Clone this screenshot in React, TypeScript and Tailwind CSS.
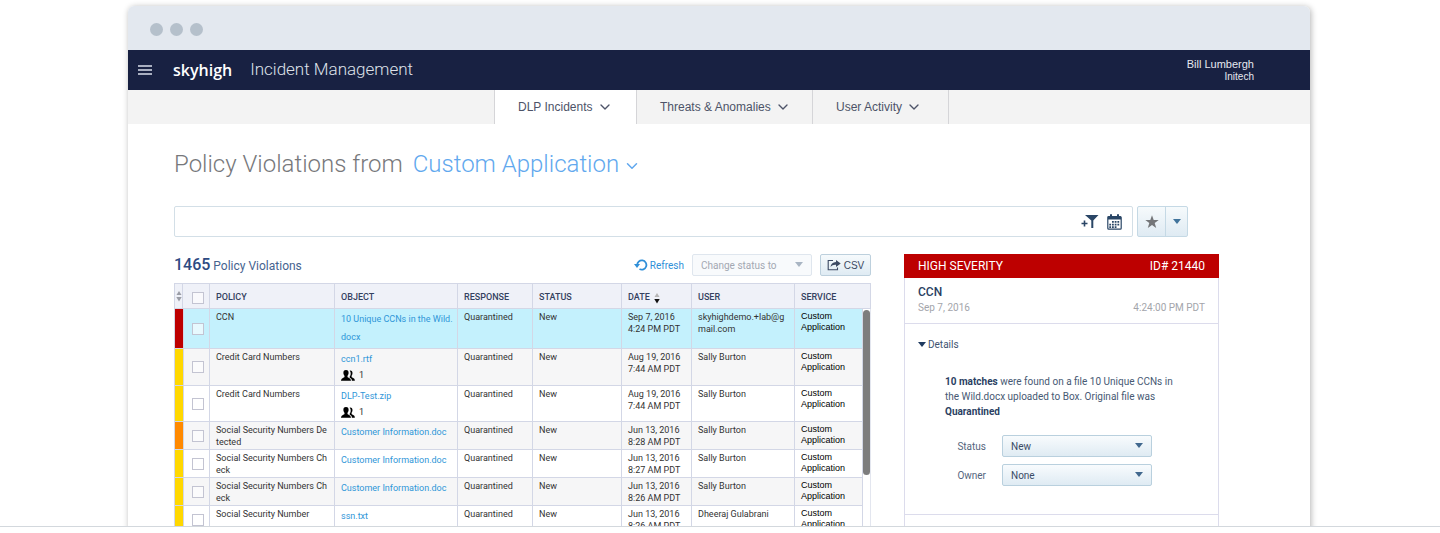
import type { ReactNode } from "react";
import { ChevronDown } from "lucide-react";

type Row = {
  severity: "high" | "medium" | "low";
  policy: string;
  object: string;
  shared?: number;
  date: string;
  user: string;
  height: string;
};

const rows: Row[] = [
  { severity: "high", policy: "CCN", object: "10 Unique CCNs in the Wild.\ndocx", date: "Sep 7, 2016\n4:24 PM PDT", user: "skyhighdemo.+lab@g\nmail.com", height: "h-10" },
  { severity: "low", policy: "Credit Card Numbers", object: "ccn1.rtf", shared: 1, date: "Aug 19, 2016\n7:44 AM PDT", user: "Sally Burton", height: "h-[37px]" },
  { severity: "low", policy: "Credit Card Numbers", object: "DLP-Test.zip", shared: 1, date: "Aug 19, 2016\n7:44 AM PDT", user: "Sally Burton", height: "h-9" },
  { severity: "medium", policy: "Social Security Numbers De\ntected", object: "Customer Information.doc", date: "Jun 13, 2016\n8:28 AM PDT", user: "Sally Burton", height: "h-7" },
  { severity: "low", policy: "Social Security Numbers Ch\neck", object: "Customer Information.doc", date: "Jun 13, 2016\n8:27 AM PDT", user: "Sally Burton", height: "h-7" },
  { severity: "low", policy: "Social Security Numbers Ch\neck", object: "Customer Information.doc", date: "Jun 13, 2016\n8:26 AM PDT", user: "Sally Burton", height: "h-7" },
  { severity: "low", policy: "Social Security Number", object: "ssn.txt", date: "Jun 13, 2016\n8:26 AM PDT", user: "Dheeraj Gulabrani", height: "h-7" },
];

const severityColor = {
  high: "bg-[#bd0000]",
  medium: "bg-[#ff8a00]",
  low: "bg-[#ffd800]",
};

const tabs = [
  { label: "DLP Incidents", style: "w-[143px] border-l bg-white" },
  { label: "Threats & Anomalies", style: "w-[176px]" },
  { label: "User Activity", style: "w-[136px]" },
];

function Caret({ className = "" }: { className?: string }) {
  return (
    <svg viewBox="0 0 8 5" className={`h-[5px] w-2 fill-current ${className}`} aria-hidden="true">
      <path d="M0 0h8L4 5z" />
    </svg>
  );
}

function SortIcon({ active = false }: { active?: boolean }) {
  return (
    <svg viewBox="0 0 6 12" className="inline-block h-3 w-1.5" aria-hidden="true">
      <path d="M3 1l2.5 4h-5z" fill={active ? "#b5b5b5" : "#9a9da6"} />
      <path d="M3 11.5L.3 7h5.4z" fill={active ? "#111" : "#9a9da6"} />
    </svg>
  );
}

function PeopleIcon() {
  return (
    <svg viewBox="0 0 14 11" className="h-[11px] w-3.5 fill-black" aria-hidden="true">
      <path d="M9.200.4c1.600 0 2.400 1.200 2.300 2.800-.1 1.200-.4 2-.9 2.500v1.200c.3.7 3.200.9 3.200 3.300v.6h-2.900c0-1.800-1-2.500-2.200-3V6.600c.9-1 1.200-2.500.9-4.100-.1-.7-.5-1.300-1-1.800z" />
      <path d="M5 0c1.900 0 2.700 1.300 2.600 3-.1 1.300-.5 2.100-1.100 2.700v1.200c.3.8 3.500 1 3.500 3.900H0C0 7.900 3.200 7.700 3.500 6.900V5.700C2.900 5.100 2.500 4.300 2.400 3 2.300 1.300 3.100 0 5 0z" />
    </svg>
  );
}

function RefreshIcon() {
  return (
    <svg viewBox="0 0 14 12" className="h-3 w-3.5" aria-hidden="true">
      <path d="M3.200 6.200a4.600 4.600 0 1 1 2.300 3.800" fill="none" stroke="currentColor" strokeWidth="1.800" />
      <path d="M0 5h6L3 9z" fill="currentColor" />
    </svg>
  );
}

function ExportIcon() {
  return (
    <svg viewBox="0 0 14 12" className="h-3 w-3.5" fill="none" aria-hidden="true">
      <path d="M6 1.500H1.200v9.300h9.300V8.500" stroke="currentColor" strokeWidth="1.100" />
      <path d="M9 1l4.700 3.500L9 8V5.800C6.500 5.600 5 6.300 3.500 8c.3-3 2.200-4.800 5.500-5z" fill="currentColor" />
    </svg>
  );
}

function FilterAddIcon() {
  return (
    <svg viewBox="0 0 18 15" className="h-[15px] w-[18px]" aria-hidden="true">
      <path d="M4 1h13.500l-5.200 5.500V14h-2V6.500z" fill="currentColor" />
      <path d="M.5 9.500h6M3.500 6.500v6" stroke="currentColor" strokeWidth="1.600" />
    </svg>
  );
}

function CalendarIcon() {
  return (
    <svg viewBox="0 0 15 16" className="h-4 w-[15px]" fill="none" aria-hidden="true">
      <rect x=".8" y="2.500" width="13.400" height="12.700" rx="1" stroke="currentColor" strokeWidth="1.200" />
      <path d="M1 2.500h13v3H1z" fill="currentColor" />
      <path d="M4 .3v3M11 .3v3" stroke="currentColor" strokeWidth="2" />
      <path
        d="M5 7h1.800v1.700H5zM7.700 7h1.800v1.700H7.700zM10.400 7h1.800v1.700h-1.800zM2.300 9.700h1.800v1.700H2.300zM5 9.700h1.800v1.700H5zM7.700 9.700h1.800v1.700H7.700zM10.400 9.700h1.800v1.700h-1.800zM2.300 12.300h1.800V14H2.300zM5 12.300h1.800V14H5zM7.700 12.300h1.800V14H7.700z"
        fill="currentColor"
      />
    </svg>
  );
}

function Checkbox({ label }: { label: string }) {
  return (
    <input
      type="checkbox"
      aria-label={label}
      className="block size-3 appearance-none border border-[#c3c4d2] bg-white/60"
    />
  );
}

function Th({ children, className = "pl-1.5", colSpan }: { children?: ReactNode; className?: string; colSpan?: number }) {
  return (
    <th
      colSpan={colSpan}
      className={`border-r border-b border-[#d3d7e6] pt-[3px] text-left text-[9px] font-medium text-[#34415f] ${className}`}
    >
      {children}
    </th>
  );
}

function Td({ children, className = "leading-3" }: { children?: ReactNode; className?: string }) {
  return (
    <td className={`border-r border-b border-[#d3d7e6] pt-0.5 pl-1.5 align-top whitespace-pre ${className}`}>
      {children}
    </td>
  );
}

function ViolationsTable() {
  return (
    <table className="mt-[7px] w-full table-fixed border-separate border-spacing-0 border-t border-l border-[#d3d7e6] text-[9px] text-[#333]">
      <colgroup>
        <col className="w-2" />
        <col className="w-[27px]" />
        <col className="w-[125px]" />
        <col />
        <col className="w-[75px]" />
        <col className="w-[89px]" />
        <col className="w-[70px]" />
        <col className="w-[103px]" />
        <col className="w-[68px]" />
        <col className="w-2" />
      </colgroup>
      <thead>
        <tr className="h-[25px] bg-[#eff1f8]">
          <th className="border-r border-b border-[#d3d7e6] text-center align-middle" aria-label="Severity">
            <SortIcon />
          </th>
          <Th className="pl-[9px]">
            <Checkbox label="Select all" />
          </Th>
          <Th>POLICY</Th>
          <Th>OBJECT</Th>
          <Th>RESPONSE</Th>
          <Th>STATUS</Th>
          <Th>
            <span className="flex items-center gap-1">
              DATE <SortIcon active />
            </span>
          </Th>
          <Th>USER</Th>
          <Th colSpan={2}>SERVICE</Th>
        </tr>
      </thead>
      <tbody>
        {rows.map((row, i) => (
          <tr key={i} className={`${row.height} ${i === 0 ? "bg-[#c4f1fd]" : i % 2 ? "bg-[#f6f6f7]" : "bg-white"}`}>
            <td className={`border-b border-[#d3d7e6] ${severityColor[row.severity]}`} />
            <td className="border-r border-b border-l border-[#d3d7e6] pl-2 align-middle">
              <Checkbox label={`Select ${row.policy}`} />
            </td>
            <Td>{row.policy}</Td>
            <td className="border-r border-b border-[#d3d7e6] pt-px pl-1.5 align-top leading-[18px] whitespace-pre">
              <a href="#" className="block text-[#2f96d8]">
                {row.object}
              </a>
              {row.shared && (
                <span className="flex h-3.5 items-center gap-1 leading-[14px]">
                  <PeopleIcon /> {row.shared}
                </span>
              )}
            </td>
            <Td>Quarantined</Td>
            <Td>New</Td>
            <Td>{row.date}</Td>
            <Td>{row.user}</Td>
            <Td className="font-['Liberation_Sans',sans-serif] leading-[11px] text-black">{"Custom\nApplication"}</Td>
            {i === 0 && (
              <td rowSpan={rows.length} className="border-r border-[#e3e6ef] bg-white pt-px align-top">
                <div className="h-[165px] w-[7px] rounded-full bg-[#7d7d7d]" />
              </td>
            )}
          </tr>
        ))}
      </tbody>
    </table>
  );
}

function DetailSelect({ label, value }: { label: string; value: string }) {
  const id = label.toLowerCase();
  return (
    <div className="flex items-center gap-4 text-[10px]">
      <label htmlFor={id} className="w-[41px] text-right text-[#55657d]">
        {label}
      </label>
      <div className="relative">
        <select
          id={id}
          className="block h-[22px] w-[150px] appearance-none rounded-xs border border-[#b9d0de] bg-linear-to-b from-[#f8fbfd] to-[#dfebf3] pl-2 text-[#3b4c66]"
        >
          <option>{value}</option>
        </select>
        <Caret className="pointer-events-none absolute top-2 right-[9px] text-[#41688e]" />
      </div>
    </div>
  );
}

function IncidentPanel() {
  return (
    <aside className="w-[315px] shrink-0 border border-t-0 border-[#dcdcec] text-[10px]">
      <div className="-mx-px flex h-6 items-center justify-between bg-[#bd0000] px-3.5 text-xs text-white">
        <span>HIGH SEVERITY</span>
        <span>ID# 21440</span>
      </div>
      <div className="border-b border-[#dcdcec] px-[13px] pt-1.5 pb-[7px]">
        <h2 className="text-xs leading-4 font-medium text-[#2b3f63]">CCN</h2>
        <div className="flex justify-between leading-4 text-[#a3a5ab]">
          <span>Sep 7, 2016</span>
          <span>4:24:00 PM PDT</span>
        </div>
      </div>
      <div className="border-b border-[#dcdcec] pt-3 pb-7">
        <button type="button" className="flex h-4 items-center gap-0.5 pl-[13px] text-[#3f5471]">
          <Caret className="text-[#1f3a5f]" />
          Details
        </button>
        <p className="mt-[22px] px-10 leading-[15px] text-[#475973]">
          <b className="text-[#2b3f63]">10 matches</b> were found on a file 10 Unique CCNs in
          <br />
          the Wild.docx uploaded to Box. Original file was
          <br />
          <b className="text-[#2b3f63]">Quarantined</b>
        </p>
        <div className="mt-4 flex flex-col gap-[7px] pl-10">
          <DetailSelect label="Status" value="New" />
          <DetailSelect label="Owner" value="None" />
        </div>
      </div>
    </aside>
  );
}

export default function App() {
  return (
    <div className="h-screen bg-white pb-1.5 font-[Roboto,sans-serif]">
      <section className="h-full overflow-hidden border-b border-[#d3d8dd] pt-1.5 pr-[130px] pl-32">
        <div className="rounded-t-md bg-white shadow-[1px_1px_6px_rgba(0,0,0,0.3)]">
          <div className="flex h-11 items-center gap-[7px] rounded-t-md bg-[#e3e8ef] pt-[3px] pl-[22px]">
            <span className="size-[13px] rounded-full bg-[#b5c0cb]" />
            <span className="size-[13px] rounded-full bg-[#b5c0cb]" />
            <span className="size-[13px] rounded-full bg-[#b5c0cb]" />
          </div>

          <header className="flex h-10 items-center bg-[#182142] pr-14 pl-2.5 text-white">
            <button type="button" aria-label="Menu">
              <svg viewBox="0 0 14 10" className="h-2.5 w-3.5" stroke="#a9afc0" strokeWidth="2">
                <path d="M0 1h14M0 5h14M0 9h14" />
              </svg>
            </button>
            <a href="#" className="ml-[21px] font-['Open_Sans',sans-serif] text-base leading-5 font-semibold">
              skyhigh
            </a>
            <span className="ml-[18px] text-[17px] font-light text-[#dfe2ea]">Incident Management</span>
            <div className="ml-auto text-right font-['Liberation_Sans',sans-serif] text-[#e6e8f0]">
              <div className="text-[11px] leading-[13px]">Bill Lumbergh</div>
              <div className="text-[10px] leading-3">Initech</div>
            </div>
          </header>

          <nav className="flex h-[34px] justify-center bg-[#f3f3f3] pl-[5px]">
            {tabs.map((tab) => (
              <button
                type="button"
                key={tab.label}
                className={`flex items-center gap-1 border-r border-[#d5d5d8] pl-[23px] font-['Liberation_Sans',sans-serif] text-xs text-[#4d5368] ${tab.style}`}
              >
                {tab.label}
                <ChevronDown className="size-4" strokeWidth={2} />
              </button>
            ))}
          </nav>

          <main className="pt-6 pr-[91px] pb-6 pl-[46px]">
            <h1 className="flex h-8 items-center gap-2.5 text-2xl font-light text-[#77787b]">
              Policy Violations from
              <button type="button" className="flex items-center gap-1 text-[#61a8ee]">
                Custom Application
                <ChevronDown className="mt-1 size-[18px]" strokeWidth={2} />
              </button>
            </h1>

            <div className="mt-[26px] mr-[31px] flex h-[31px] gap-1">
              <div className="flex flex-1 items-center gap-2 rounded-xs border border-[#d3dfe7] pr-2.5 text-[#2a4666]">
                <input type="text" aria-label="Filter violations" className="h-full min-w-0 flex-1 px-2 text-xs outline-none" />
                <button type="button" aria-label="Add filter">
                  <FilterAddIcon />
                </button>
                <button type="button" aria-label="Pick dates">
                  <CalendarIcon />
                </button>
              </div>
              <div className="flex rounded-xs border border-[#c5d9e5] bg-linear-to-b from-[#f6fafc] to-[#dfebf3]">
                <button type="button" aria-label="Favorite" className="flex w-7 items-center justify-center border-r border-[#c5d9e5]">
                  <svg viewBox="0 0 14 14" className="size-3.5 fill-[#747679]" aria-hidden="true">
                    <path d="M7 .3l1.700 4.800h5l-4 3 1.500 4.900L7 10l-4.200 3 1.500-4.900-4-3h5z" />
                  </svg>
                </button>
                <button type="button" aria-label="Saved filters" className="flex w-[21px] items-center justify-center text-[#41749c]">
                  <Caret />
                </button>
              </div>
            </div>

            <div className="mt-[17px] flex justify-between gap-[33px]">
              <div className="min-w-0 flex-1">
                <div className="flex h-[22px] items-center text-[10px]">
                  <h2 className="text-xs text-[#46638f]">
                    <span className="text-base font-medium text-[#2d4a82]">1465</span> Policy Violations
                  </h2>
                  <button type="button" className="ml-auto flex items-center gap-0.5 text-[#2f8fd8]">
                    <RefreshIcon />
                    Refresh
                  </button>
                  <div className="relative ml-2">
                    <select
                      aria-label="Change status to"
                      className="block h-[22px] w-[120px] appearance-none rounded-xs border border-[#dfe6ee] bg-[#f8fafc] pl-2 text-[#a3a8b2]"
                    >
                      <option>Change status to</option>
                    </select>
                    <Caret className="pointer-events-none absolute top-2 right-[9px] text-[#a9b5c3]" />
                  </div>
                  <button
                    type="button"
                    className="ml-2 flex h-[22px] w-[51px] items-center justify-center gap-[3px] rounded-xs border border-[#bdd0dd] bg-linear-to-b from-[#f6fafc] to-[#dfebf3] font-['Liberation_Sans',sans-serif] text-[#3c4a63]"
                  >
                    <ExportIcon />
                    CSV
                  </button>
                </div>
                <ViolationsTable />
              </div>
              <IncidentPanel />
            </div>
          </main>
        </div>
      </section>
    </div>
  );
}
